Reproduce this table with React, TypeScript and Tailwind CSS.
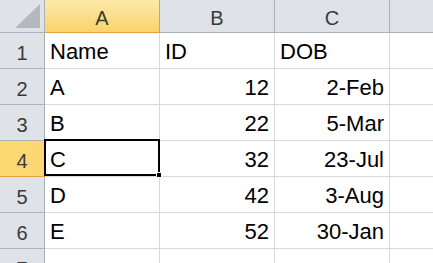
import React from "react";

const rows = [
  ["Name", "ID", "DOB"],
  ["A", "12", "2-Feb"],
  ["B", "22", "5-Mar"],
  ["C", "32", "23-Jul"],
  ["D", "42", "3-Aug"],
  ["E", "52", "30-Jan"],
  ["", "", ""],
];

export default function App() {
  return (
    <div
      className="relative w-[433px] h-[263px] overflow-hidden bg-white"
      style={{ fontFamily: "'Liberation Sans', Arial, sans-serif" }}
    >
      {/* header row */}
      <div className="flex h-[33px]">
        <div className="relative w-[45px] shrink-0 h-full bg-[#dfe3e8] border-r border-b border-[#a9b1ba]">
          <svg className="absolute left-0 top-0" width="44" height="32">
            <polygon points="15,28 40,28 40,4" fill="#b5b9bf" />
          </svg>
        </div>
        <div className="w-[115px] shrink-0 h-full bg-gradient-to-b from-[#fdeaa8] to-[#f9d36c] border-r border-b border-[#e2a13d] flex items-center justify-center pt-[3px] text-[20px] text-[#3a3a3a]">
          A
        </div>
        <div className="w-[115px] shrink-0 h-full bg-[#dfe3e8] border-r border-b border-[#aab1b9] flex items-center justify-center pt-[3px] text-[20px] text-[#3a3a3a]">
          B
        </div>
        <div className="w-[115px] shrink-0 h-full bg-[#dfe3e8] border-r border-b border-[#aab1b9] flex items-center justify-center pt-[3px] text-[20px] text-[#3a3a3a]">
          C
        </div>
        <div className="flex-1 h-full bg-[#dfe3e8] border-b border-[#aab1b9]" />
      </div>

      {rows.map((r, i) => {
        const sel = i === 3;
        return (
          <div key={i} className="flex h-[36px]">
            <div
              className={
                sel
                  ? "w-[45px] shrink-0 h-full bg-[#fcd772] border-r border-b border-[#e2a13d] flex items-center justify-center pt-[4px] text-[20px] text-[#3a3a3a]"
                  : "w-[45px] shrink-0 h-full bg-[#dfe3e8] border-r border-b border-[#aab1b9] flex items-center justify-center pt-[4px] text-[20px] text-[#3a3a3a]"
              }
            >
              {i + 1}
            </div>
            <div className="w-[115px] shrink-0 h-full border-r border-b border-[#d9d9d9] flex items-center pl-[5px] pt-[2px] text-[22px] text-black">
              {r[0]}
            </div>
            <div
              className={
                i === 0
                  ? "w-[115px] shrink-0 h-full border-r border-b border-[#d9d9d9] flex items-center pl-[5px] pt-[2px] text-[22px] text-black"
                  : "w-[115px] shrink-0 h-full border-r border-b border-[#d9d9d9] flex items-center justify-end pr-[5px] pt-[2px] text-[22px] text-black"
              }
            >
              {r[1]}
            </div>
            <div
              className={
                i === 0
                  ? "w-[115px] shrink-0 h-full border-r border-b border-[#d9d9d9] flex items-center pl-[5px] pt-[2px] text-[22px] text-black"
                  : "w-[115px] shrink-0 h-full border-r border-b border-[#d9d9d9] flex items-center justify-end pr-[5px] pt-[2px] text-[22px] text-black"
              }
            >
              {r[2]}
            </div>
            <div className="flex-1 h-full border-b border-[#d9d9d9]" />
          </div>
        );
      })}

      {/* selection box */}
      <div className="absolute left-[44px] top-[139px] w-[116px] h-[37px] border-2 border-black pointer-events-none" />
      <div className="absolute left-[156px] top-[172px] w-[6px] h-[6px] bg-black border border-white" />
    </div>
  );
}
